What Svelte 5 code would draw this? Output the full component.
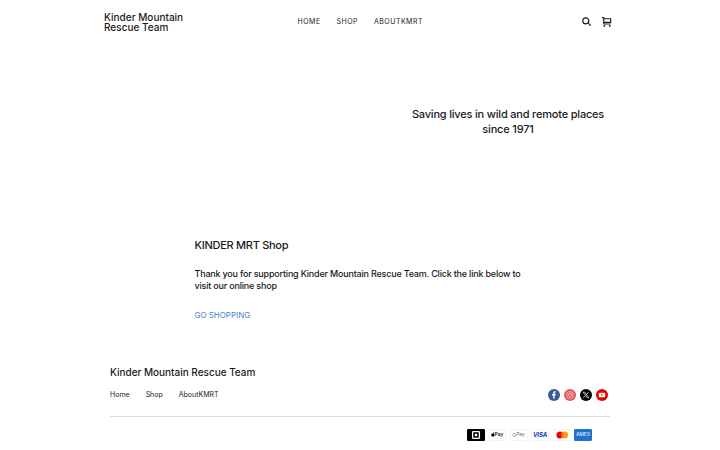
<script lang="ts">
  interface Link {
    label: string;
    href: string;
  }

  const title = "Kinder Mountain Rescue Team";

  const links: Link[] = [
    { label: "Home", href: "#home" },
    { label: "Shop", href: "#shop" },
    { label: "AboutKMRT", href: "#about" },
  ];
</script>

<header class="header">
  <a class="brand" href="#home">{title}</a>

  <nav class="nav" aria-label="Main">
    {#each links as link (link.href)}
      <a href={link.href}>{link.label}</a>
    {/each}
  </nav>

  <div class="actions">
    <button type="button" aria-label="Search">
      <svg viewBox="0 0 10 10" fill="none" stroke="currentColor" stroke-width="1.2">
        <circle cx="3.8" cy="3.8" r="3" />
        <path d="M6.1 6.1L8.4 8.4" stroke-linecap="round" />
      </svg>
    </button>
    <button type="button" aria-label="Cart">
      <svg viewBox="0 0 10 10" fill="none" stroke="currentColor" stroke-width="1.1">
        <path d="M0 .6h1.7v6.4h6.9M1.7 1.8h7v3.600h-7" />
        <circle cx="2.4" cy="8.9" r=".9" fill="currentColor" stroke="none" />
        <circle cx="7.7" cy="8.9" r=".9" fill="currentColor" stroke="none" />
      </svg>
    </button>
  </div>
</header>

<main>
  <section class="hero">
    <h1>Saving lives in wild and remote places since 1971</h1>
  </section>

  <section class="shop">
    <h2>KINDER MRT Shop</h2>
    <p>
      Thank you for supporting Kinder Mountain Rescue Team. Click the link below to
      visit our online shop
    </p>
    <a class="cta" href="#shop">GO SHOPPING</a>
  </section>
</main>

<footer class="footer">
  <h3>{title}</h3>

  <div class="footer-row">
    <nav class="footer-nav" aria-label="Footer">
      {#each links as link (link.href)}
        <a href={link.href}>{link.label}</a>
      {/each}
    </nav>

    <div class="social">
      <svg viewBox="0 0 24 24" role="img" aria-label="Facebook">
        <circle cx="12" cy="12" r="12" fill="#3b5998" />
        <path
          d="M10.4 19.5v-6.7H8.3v-2.6h2.1V8.3c0-2.4 1.3-3.6 3.4-3.6.9 0 1.7.1 1.9.1v2.4h-1.3c-1 0-1.3.5-1.3 1.3v1.7h2.5l-.4 2.6h-2.1v6.7z"
          fill="#fff"
        />
      </svg>
      <svg viewBox="0 0 24 24" role="img" aria-label="Instagram">
        <circle cx="12" cy="12" r="12" fill="#e15a5f" />
        <g fill="none" stroke="#fff" stroke-width="1.3" opacity=".8">
          <rect x="5.8" y="5.8" width="12.4" height="12.4" rx="3.5" />
          <circle cx="12" cy="12" r="3" />
        </g>
        <circle cx="15.5" cy="8.5" r=".8" fill="#fff" />
      </svg>
      <svg viewBox="0 0 24 24" role="img" aria-label="X">
        <circle cx="12" cy="12" r="12" fill="#000" />
        <path
          d="M6.2 6.4h3.3l8.3 11.2h-3.3zM17.3 6.2l-4.6 5.1M11.2 12.9l-4.6 4.9"
          fill="none"
          stroke="#fff"
          stroke-width="1.4"
        />
      </svg>
      <svg viewBox="0 0 24 24" role="img" aria-label="YouTube">
        <circle cx="12" cy="12" r="12" fill="#e60000" />
        <rect x="5.5" y="7.4" width="13" height="9.2" rx="2.4" fill="#fff" />
        <path d="M10.6 9.8v4.4l3.8-2.2z" fill="#e60000" />
      </svg>
    </div>
  </div>

  <div class="payments">
    <span class="card square">
      <svg viewBox="0 0 18 12" role="img" aria-label="Square">
        <rect x="5.6" y="2.6" width="6.8" height="6.8" rx=".6" fill="none" stroke="#fff" stroke-width="1.3" />
        <rect x="7.8" y="4.8" width="2.4" height="2.4" fill="#fff" />
      </svg>
    </span>
    <span class="card apple">
      <svg viewBox="0 0 10 12" aria-hidden="true">
        <path
          d="M6.7.4c.1 1.2-.8 2.3-2 2.3C4.6 1.6 5.5.6 6.7.4zM8.8 4.1C7 5.2 7.3 7.5 9.2 8.3 8.6 10 7.7 11.2 6.8 11.2c-.7 0-.9-.4-1.8-.4s-1.2.4-1.8.4C1.7 11.2.2 7.6 1 5.2c.5-1.900 2.400-2.500 4.100-1.600 1.300-.7 2.700-.5 3.700.5z"
        />
      </svg>
      <span>Pay</span>
    </span>
    <span class="card google">
      <svg viewBox="0 0 10 10" fill="none" stroke-width="1.8" aria-hidden="true">
        <path d="M8 2.2A4 4 0 0 0 1.5 3" stroke="#ea4335" />
        <path d="M1.5 3a4 4 0 0 0 0 4" stroke="#fbbc04" />
        <path d="M1.5 7A4 4 0 0 0 7.5 8" stroke="#34a853" />
        <path d="M7.5 8A4 4 0 0 0 9 5H5" stroke="#4285f4" />
      </svg>
      <span>Pay</span>
    </span>
    <span class="card visa">VISA</span>
    <span class="card">
      <svg viewBox="0 0 18 12" role="img" aria-label="Mastercard">
        <circle cx="7" cy="6" r="3.6" fill="#eb001b" />
        <circle cx="11.6" cy="6" r="3.6" fill="#f79e1b" />
        <path d="M9.3 3.2a3.6 3.6 0 0 1 0 5.600 3.600 3.600 0 0 1 0-5.600z" fill="#ff5f00" />
      </svg>
    </span>
    <span class="card amex">AMEX</span>
  </div>
</footer>

<style>
  :global(body) {
    background: #fff;
    color: #1a1a1a;
    font-family: Inter, "Liberation Sans", sans-serif;
  }

  a {
    color: inherit;
    text-decoration: none;
  }

  h1,
  h2,
  h3,
  p {
    margin: 0;
    font-weight: 500;
  }

  .header {
    display: grid;
    grid-template-columns: 193.5px 1fr auto;
    align-items: center;
    height: 43px;
    padding: 0 108px 0 104px;
  }

  .brand {
    width: 90px;
    font-size: 10px;
    font-weight: 500;
    line-height: 10px;
    letter-spacing: 0.01px;
  }

  .nav {
    display: flex;
    gap: 15.9px;
    font-size: 7px;
    line-height: 10px;
    letter-spacing: 0.5px;
    text-transform: uppercase;
  }

  .actions {
    display: flex;
    gap: 10px;
  }

  .actions button {
    width: 10px;
    height: 10px;
    padding: 0;
    border: 0;
    background: none;
    color: #1a1a1a;
  }

  .actions svg {
    display: block;
    width: 100%;
    height: 100%;
  }

  .hero {
    display: flex;
    justify-content: flex-end;
    height: 130px;
    padding: 64px 110px 0 0;
  }

  h1 {
    width: 204px;
    font-size: 11px;
    line-height: 15px;
    letter-spacing: -0.19px;
    text-align: center;
  }

  .shop {
    padding-left: 194.5px;
  }

  h2 {
    font-size: 11px;
    line-height: 16px;
    letter-spacing: -0.28px;
  }

  .shop p {
    width: 335px;
    margin: 15.4px 0 16.6px;
    font-size: 9px;
    line-height: 12px;
    letter-spacing: -0.2px;
  }

  .cta {
    display: block;
    color: #4584cb;
    font-size: 8px;
    line-height: 12px;
    letter-spacing: -0.03px;
  }

  .footer {
    padding: 44px 110px 0;
  }

  h3 {
    font-size: 10px;
    line-height: 14px;
    letter-spacing: -0.02px;
  }

  .footer-row {
    display: flex;
    align-items: center;
    justify-content: space-between;
    height: 33px;
    padding: 0 2px 4px 0;
    border-bottom: 1px solid #dcdcdc;
  }

  .footer-nav {
    display: flex;
    gap: 16px;
    font-size: 7px;
    line-height: 10px;
  }

  .social {
    display: flex;
    gap: 4px;
  }

  .social svg {
    width: 12px;
    height: 12px;
  }

  .payments {
    display: flex;
    justify-content: flex-end;
    gap: 3.5px;
    padding: 12px 18px 0 0;
  }

  .card {
    display: flex;
    align-items: center;
    justify-content: center;
    box-sizing: border-box;
    width: 18px;
    height: 12px;
    border: 1px solid #f4f4f4;
    border-radius: 1px;
    font-size: 5px;
    line-height: 1;
  }

  .card > svg {
    flex: none;
    width: 18px;
    height: 12px;
  }

  .square {
    border-color: #000;
    background: #000;
  }

  .apple {
    color: #000;
    font-weight: 500;
  }

  .apple > svg {
    width: 4px;
    height: 5px;
  }

  .google {
    color: #5f6368;
  }

  .google > svg {
    width: 4px;
    height: 4px;
  }

  .visa {
    color: #2530b4;
    font-size: 6px;
    font-style: italic;
    font-weight: 700;
    letter-spacing: -0.1px;
  }

  .amex {
    border-color: #1f72cd;
    background: #1f72cd;
    color: #d6e6f8;
    font-size: 5px;
    font-weight: 500;
    letter-spacing: -0.1px;
  }
</style>
